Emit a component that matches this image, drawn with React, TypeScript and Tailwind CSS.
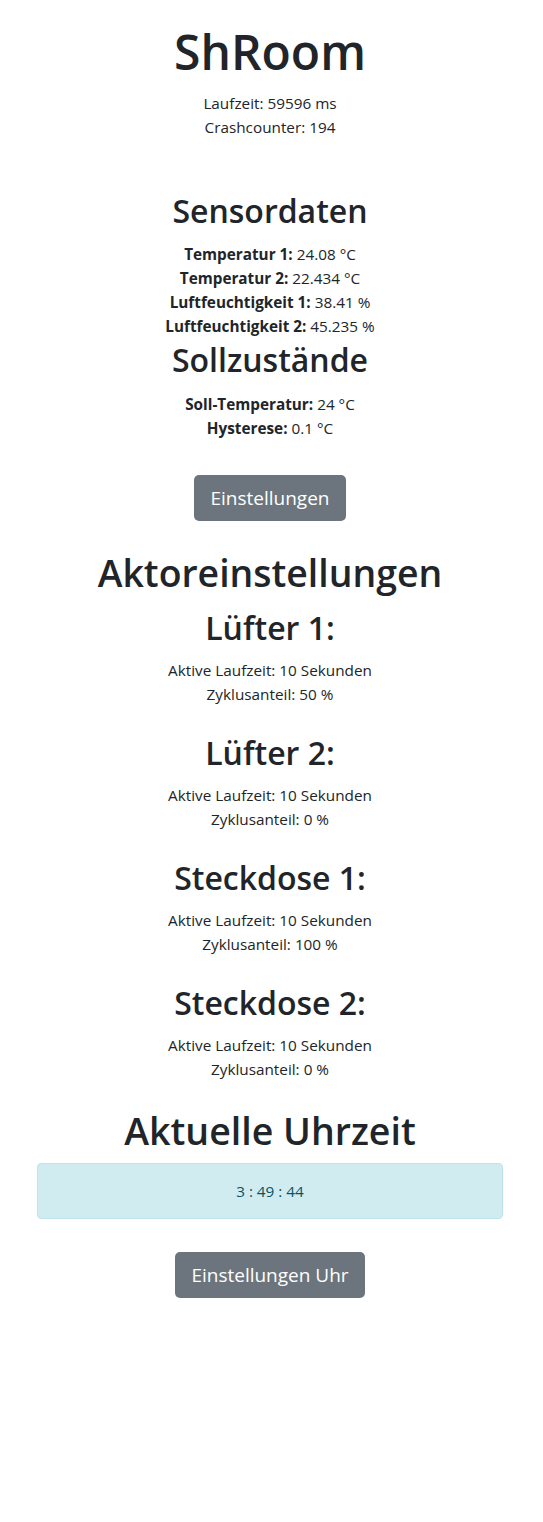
import { FC } from "react";

const actors = [
  { name: "Lüfter 1:", runtime: 10, share: 50 },
  { name: "Lüfter 2:", runtime: 10, share: 0 },
  { name: "Steckdose 1:", runtime: 10, share: 100 },
  { name: "Steckdose 2:", runtime: 10, share: 0 },
];

const Actor: FC<{ name: string; runtime: number; share: number; first?: boolean }> = (props) => {
  return (
    <div className={props.first ? "mt-[10px]" : "mt-[26px]"}>
      <h2 className="text-[32px] leading-[42px] font-semibold">{props.name}</h2>
      <p className="mt-[9px]">Aktive Laufzeit: {props.runtime} Sekunden</p>
      <p>Zyklusanteil: {props.share} %</p>
    </div>
  );
};

const App: FC = () => {
  return (
    <div
      className="min-h-[1522px] bg-white pt-[23px] pr-[40px] pl-[37px] text-center text-[15.3px] leading-[24px] text-[#212529]"
      style={{ fontFamily: '"Open Sans", "Noto Sans", sans-serif' }}
    >
      <h1 className="text-[48px] leading-[58px] font-semibold">ShRoom</h1>
      <p className="mt-[10px]">Laufzeit: 59596 ms</p>
      <p>Crashcounter: 194</p>

      <h2 className="mt-[53px] text-[32px] leading-[38px] font-semibold">Sensordaten</h2>
      <div className="mt-[12px]">
        <p>
          <b className="font-bold">Temperatur 1:</b> 24.08 °C
        </p>
        <p>
          <b className="font-bold">Temperatur 2:</b> 22.434 °C
        </p>
        <p>
          <b className="font-bold">Luftfeuchtigkeit 1:</b> 38.41 %
        </p>
        <p>
          <b className="font-bold">Luftfeuchtigkeit 2:</b> 45.235 %
        </p>
      </div>

      <h2 className="mt-[3px] text-[32px] leading-[38px] font-semibold">Sollzustände</h2>
      <div className="mt-[13px]">
        <p>
          <b className="font-bold">Soll-Temperatur:</b> 24 °C
        </p>
        <p>
          <b className="font-bold">Hysterese:</b> 0.1 °C
        </p>
      </div>

      <button className="mt-[35px] h-[46px] rounded-[5px] bg-[#6c757d] px-4 text-[19px] text-white">
        Einstellungen
      </button>

      <h1 className="mt-[28px] text-[37.4px] leading-[48px] font-semibold">Aktoreinstellungen</h1>
      {actors.map((a, i) => (
        <Actor key={a.name} name={a.name} runtime={a.runtime} share={a.share} first={i === 0} />
      ))}

      <h1 className="mt-[26px] text-[37.5px] leading-[48px] font-semibold">Aktuelle Uhrzeit</h1>
      <div className="mt-[8px] flex h-[56px] items-center justify-center rounded-[4px] border border-[#bee5eb] bg-[#d1ecf1] text-[#0c5460]">
        3 : 49 : 44
      </div>

      <button className="mt-[33px] h-[46px] rounded-[5px] bg-[#6c757d] px-4 text-[19px] text-white">
        Einstellungen Uhr
      </button>
    </div>
  );
};

export default App;
